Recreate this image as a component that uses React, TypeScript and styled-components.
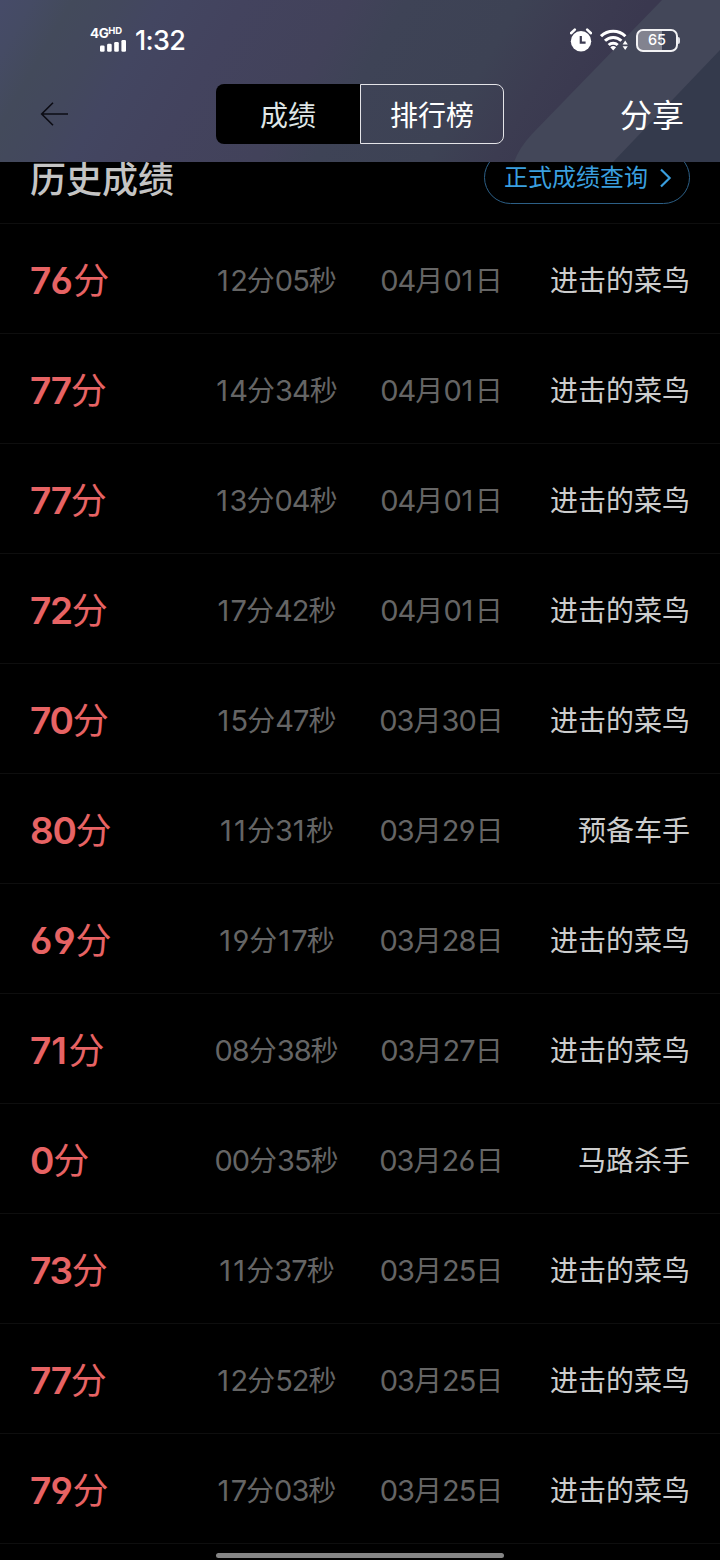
import React from 'react';
import styled, { createGlobalStyle } from 'styled-components';

const GlobalStyle = createGlobalStyle`
  * { box-sizing: border-box; }
  html, body { margin: 0; background: #000; }
  body { font-family: Inter, "Noto Sans CJK SC", sans-serif; overflow: hidden; }
`;

const Screen = styled.div`
  display: flex;
  flex-direction: column;
  width: 720px;
  height: 1560px;
  background: #000;
  overflow: hidden;
`;

const Header = styled.header`
  position: relative;
  z-index: 1;
  flex: none;
  display: flex;
  flex-direction: column;
  height: 162px;
  background: linear-gradient(120deg, #464b68 0%, #454b64 4%, #434a5b 9%, #43485d 15%, #434661 20%, #43435e 30%, #42425a 43%, #3e4356 50%, #3d4254 64%, #3c3c51 72%, #3a384f 80%, #3a384f 100%);
`;

const Backdrop = styled.svg`
  position: absolute;
  inset: 0;
`;

const StatusBar = styled.div`
  position: relative;
  display: flex;
  align-items: center;
  justify-content: space-between;
  height: 80px;
  padding: 0 42px 0 90px;
`;

const StatusGroup = styled.div<{ $gap: number }>`
  display: flex;
  align-items: center;
  gap: ${(p) => p.$gap}px;
`;

const Signal = styled.div`
  display: flex;
  flex-direction: column;
  align-items: flex-end;
  width: 37px;
  height: 26px;
`;

const Network = styled.div`
  display: flex;
  align-items: flex-start;
  width: 37px;
  height: 13px;
  color: #fff;
  font-size: 13.5px;
  font-weight: 700;
  line-height: 12px;
  letter-spacing: -0.5px;
`;

const NetworkSup = styled.span`
  font-size: 9.5px;
  line-height: 8px;
  letter-spacing: 0;
`;

const Clock = styled.span`
  padding-top: 1px;
  color: #fff;
  font-size: 27px;
  font-weight: 500;
  line-height: 32px;
  letter-spacing: -0.7px;
`;

const Battery = styled.div`
  position: relative;
  display: flex;
  align-items: center;
  justify-content: center;
  width: 42px;
  height: 23px;
  border: 2px solid #f2f2f4;
  border-radius: 7px;
  background: linear-gradient(90deg, #82838f 0 62%, #3c4053 62%);
  color: #fff;
  font-size: 14.5px;
  font-weight: 500;
  line-height: 18px;
  padding-bottom: 1px;

  &::after {
    content: '';
    position: absolute;
    right: -4px;
    top: 6px;
    width: 2px;
    height: 7px;
    border-radius: 0 2px 2px 0;
    background: #dcdce2;
  }
`;

const NavBar = styled.nav`
  position: relative;
  display: grid;
  grid-template-columns: 1fr 288px 1fr;
  align-items: center;
  height: 60px;
  margin-top: 4px;
  padding: 0 36px;
`;

const BackButton = styled.button`
  display: flex;
  width: 40px;
  padding: 0;
  border: 0;
  background: none;
`;

const Tabs = styled.div`
  display: flex;
  width: 288px;
  height: 60px;
`;

const Tab = styled.button<{ $active?: boolean }>`
  width: 144px;
  padding: 3px 0 0;
  border: ${(p) => (p.$active ? '0' : '1.5px solid #e4e4e8')};
  border-radius: ${(p) => (p.$active ? '8px 0 0 8px' : '0 8px 8px 0')};
  background: ${(p) => (p.$active ? '#000' : 'transparent')};
  color: ${(p) => (p.$active ? '#dfe6e6' : '#fff')};
  font-family: inherit;
  font-size: 28px;
  line-height: 40px;
`;

const ShareButton = styled.button`
  justify-self: end;
  padding: 3px 0 0;
  border: 0;
  background: none;
  color: #fff;
  font-family: inherit;
  font-size: 32px;
  line-height: 44px;
`;

const SectionHead = styled.section`
  flex: none;
  display: flex;
  align-items: flex-end;
  justify-content: space-between;
  height: 93px;
  margin-top: -31px;
  padding: 0 30px 19px;
  border-bottom: 1px solid #0e0e0e;
`;

const Title = styled.h1`
  margin: 0;
  color: #c4c4c4;
  font-size: 36px;
  font-weight: 500;
  line-height: 48px;
`;

const QueryLink = styled.a`
  display: flex;
  align-items: center;
  justify-content: space-between;
  width: 206px;
  height: 53px;
  padding: 0 17px 0 19px;
  border: 1px solid #2c5f86;
  border-radius: 27px;
  color: #3a9fdf;
  font-size: 24px;
  line-height: 36px;
`;

const List = styled.ul`
  flex: none;
  margin: 0;
  padding: 0;
  list-style: none;
`;

const Row = styled.li`
  display: grid;
  grid-template-columns: 164px 165px 165px 1fr;
  align-items: center;
  height: 110px;
  padding: 4px 30px 0;
  border-bottom: 1px solid #0e0e0e;
`;

const DigitRun = styled.span<{ $size: number; $weight: number }>`
  font-size: ${(p) => p.$size}px;
  font-weight: ${(p) => p.$weight};
  font-feature-settings: "cv03", "cv04";
`;

const Digit = styled.span<{ $before: number; $after: number }>`
  letter-spacing: -0.034em;
  padding: 0 ${(p) => p.$after}em 0 ${(p) => p.$before}em;
`;

const Score = styled.div`
  color: #e76364;
  font-size: 36px;
  line-height: 50px;
  white-space: nowrap;
`;

const Detail = styled.div`
  color: #656565;
  font-size: 28px;
  line-height: 40px;
  text-align: center;
  white-space: nowrap;
`;

const Rank = styled.div`
  color: #cdcdcd;
  font-size: 28px;
  line-height: 40px;
  text-align: right;
  white-space: nowrap;
`;

const HomeBar = styled.div`
  flex: none;
  align-self: center;
  width: 288px;
  height: 5px;
  margin-top: 9px;
  border-radius: 3px;
  background: #858585;
`;

type Result = { score: string; time: [string, string]; date: [string, string]; rank: string };

const ROOKIE = '进击的菜鸟';

const results: Result[] = [
  { score: '76', time: ['12', '05'], date: ['04', '01'], rank: ROOKIE },
  { score: '77', time: ['14', '34'], date: ['04', '01'], rank: ROOKIE },
  { score: '77', time: ['13', '04'], date: ['04', '01'], rank: ROOKIE },
  { score: '72', time: ['17', '42'], date: ['04', '01'], rank: ROOKIE },
  { score: '70', time: ['15', '47'], date: ['03', '30'], rank: ROOKIE },
  { score: '80', time: ['11', '31'], date: ['03', '29'], rank: '预备车手' },
  { score: '69', time: ['19', '17'], date: ['03', '28'], rank: ROOKIE },
  { score: '71', time: ['08', '38'], date: ['03', '27'], rank: ROOKIE },
  { score: '0', time: ['00', '35'], date: ['03', '26'], rank: '马路杀手' },
  { score: '73', time: ['11', '37'], date: ['03', '25'], rank: ROOKIE },
  { score: '77', time: ['12', '52'], date: ['03', '25'], rank: ROOKIE },
  { score: '79', time: ['17', '03'], date: ['03', '25'], rank: ROOKIE },
];

// Extra space before and after, in em, for the digits drawn narrower than the rest.
const sideSpace: Record<string, [number, number]> = {
  '1': [0.03, 0.08],
  '6': [0.01, 0.05],
  '9': [0.01, 0.03],
};

function Digits({ value, size, weight = 400 }: { value: string; size: number; weight?: number }) {
  return (
    <DigitRun $size={size} $weight={weight}>
      {value.split('').map((d, i) => {
        const [before, after] = sideSpace[d] ?? [0, 0];
        return (
          <Digit key={i} $before={i === 0 && d !== '1' ? 0 : before} $after={after}>
            {d}
          </Digit>
        );
      })}
    </DigitRun>
  );
}

function Pair({ values, units }: { values: [string, string]; units: [string, string] }) {
  return (
    <Detail>
      <Digits size={29} value={values[0]} />
      {units[0]}
      <Digits size={29} value={values[1]} />
      {units[1]}
    </Detail>
  );
}

function AlarmIcon() {
  return (
    <svg width="22" height="24" viewBox="0 0 22 24" fill="none">
      <circle cx="11" cy="13.3" r="10.2" fill="#fff" />
      <path d="M1 5.2 4.8 1.6M21 5.2 17.2 1.6" stroke="#fff" strokeWidth="2.6" strokeLinecap="round" />
      <path d="M10.8 8v6.6h4.8" stroke="#3c3b51" strokeWidth="2.2" />
    </svg>
  );
}

function WifiIcon() {
  return (
    <svg width="28" height="22" viewBox="0 0 28 22" fill="none">
      <g stroke="#fff" strokeWidth="3">
        <path d="M1 7.2a17.3 17.3 0 0 1 24.4 0" />
        <path d="M5 11.8a11.6 11.6 0 0 1 16.4 0" />
        <path d="M8.7 16a6.4 6.4 0 0 1 9 0" />
      </g>
      <path d="M10.3 18.2a4.3 4.3 0 0 1 5.8 0l-2.9 3.2z" fill="#fff" />
      <path d="m25.2 11.6 2.6 3.8h-5.2zM25.2 21l2.6-3.8h-5.2z" fill="#fff" />
    </svg>
  );
}

export default function App() {
  return (
    <Screen>
      <GlobalStyle />
      <Header>
        <Backdrop width="720" height="162" viewBox="0 0 720 162">
          <path d="M662 0H720V162H514Q519 148 532 134Z" fill="#434759" />
          <path d="M720 50V162H613Z" fill="#343a4c" />
        </Backdrop>
        <StatusBar>
          <StatusGroup $gap={8}>
            <Signal>
              <Network>
                4G<NetworkSup>HD</NetworkSup>
              </Network>
              <svg width="27" height="12" viewBox="0 0 27 12" fill="#fff">
                <rect x="0" y="5.5" width="4.6" height="6.3" rx="1.3" />
                <rect x="7.1" y="3.8" width="4.6" height="8" rx="1.3" />
                <rect x="14.2" y="2" width="4.6" height="9.8" rx="1.3" />
                <rect x="21.4" y="0" width="4.6" height="11.8" rx="1.3" />
              </svg>
            </Signal>
            <Clock>1:32</Clock>
          </StatusGroup>
          <StatusGroup $gap={8}>
            <AlarmIcon />
            <WifiIcon />
            <Battery>65</Battery>
          </StatusGroup>
        </StatusBar>
        <NavBar>
          <BackButton aria-label="返回">
            <svg width="36" height="26" viewBox="0 0 36 26" fill="none" stroke="#0c0c14" strokeWidth="1.6">
              <path d="M32 13H6M17 1.7 5.7 13 17 24.3" />
            </svg>
          </BackButton>
          <Tabs>
            <Tab $active>成绩</Tab>
            <Tab>排行榜</Tab>
          </Tabs>
          <ShareButton>分享</ShareButton>
        </NavBar>
      </Header>
      <SectionHead>
        <Title>历史成绩</Title>
        <QueryLink>
          正式成绩查询
          <svg width="13" height="20" viewBox="0 0 13 20" fill="none" stroke="#3a9fdf" strokeWidth="2.2">
            <path d="m2 1.5 8.6 8.5L2 18.5" />
          </svg>
        </QueryLink>
      </SectionHead>
      <List>
        {results.map((r, i) => (
          <Row key={i}>
            <Score>
              <Digits size={37} weight={600} value={r.score} />分
            </Score>
            <Pair values={r.time} units={['分', '秒']} />
            <Pair values={r.date} units={['月', '日']} />
            <Rank>{r.rank}</Rank>
          </Row>
        ))}
      </List>
      <HomeBar />
    </Screen>
  );
}
